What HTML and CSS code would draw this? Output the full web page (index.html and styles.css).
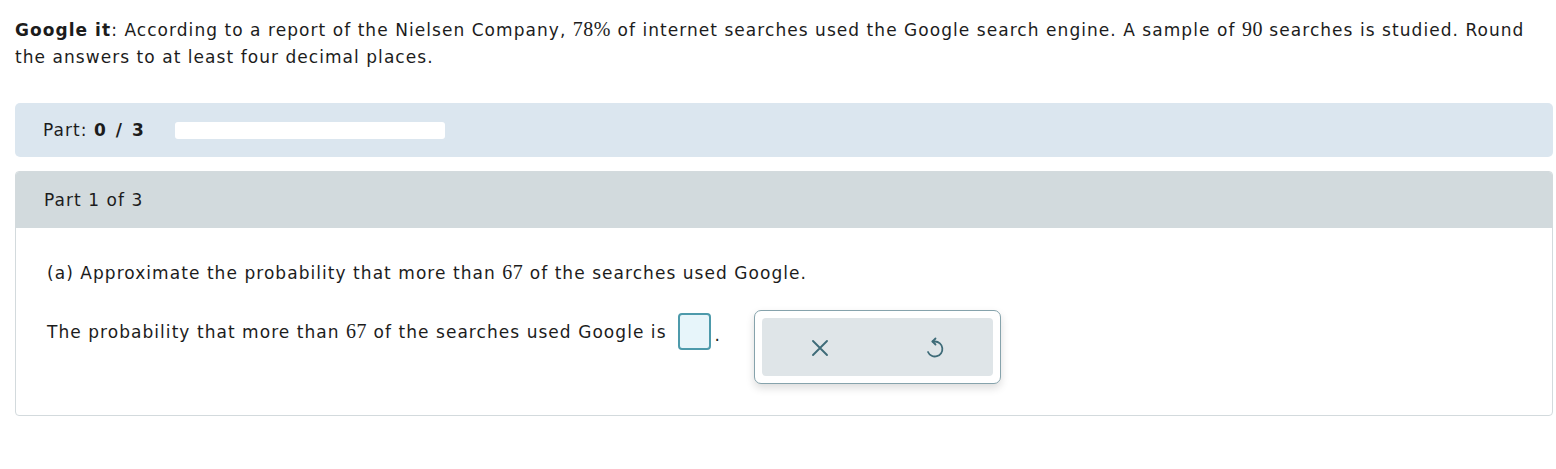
FILE: index.html
```html
<!DOCTYPE html>
<html>
<head>
<meta charset="utf-8">
<link rel="stylesheet" href="styles.css">
</head>
<body>
<div class="page">
  <p class="intro"><b>Google it</b>: According to a report of the Nielsen Company, <span class="m">78%</span> of internet searches used the Google search engine. A sample of <span class="m">90</span> searches is studied. Round the answers to at least four decimal places.</p>

  <div class="partbar">
    <span class="partlabel">Part: <b>0 / 3</b></span>
    <div class="progress"></div>
  </div>

  <div class="panel">
    <div class="panel-head">Part 1 of 3</div>
    <div class="panel-body">
      <p class="question">(a) Approximate the probability that more than <span class="m">67</span> of the searches used Google.</p>
      <div class="answer-row">
        <div class="answer">
          <span>The probability that more than <span class="m">67</span> of the searches used Google is</span>
          <span class="input"></span>
          <span class="dot">.</span>
        </div>
        <div class="toolbar">
          <div class="tools">
            <button class="tool" aria-label="clear">
              <svg width="18" height="18" viewBox="0 0 18 18"><path d="M2 2 L16 16 M16 2 L2 16" stroke="#3e6b78" stroke-width="1.9" fill="none" stroke-linecap="round"/></svg>
            </button>
            <button class="tool" aria-label="reset">
              <svg width="20" height="22" viewBox="0 0 20 22"><path d="M7.5 4.5 H10 A7.5 7.5 0 1 1 3 15" stroke="#3e6b78" stroke-width="1.8" fill="none" stroke-linecap="round"/><path d="M10.5 1.5 L7.5 4.5 L10.5 7.5" stroke="#3e6b78" stroke-width="1.8" fill="none" stroke-linecap="round" stroke-linejoin="round"/></svg>
            </button>
          </div>
        </div>
      </div>
    </div>
  </div>
</div>
</body>
</html>
```

FILE: styles.css
```css
html, body {
  margin: 0;
  padding: 0;
  background: #ffffff;
}
body {
  font-family: "DejaVu Sans", Verdana, sans-serif;
  font-size: 17px;
  letter-spacing: 1.05px;
  color: #1c1c1c;
}
.page {
  padding: 16px 3px 0 15px;
}
.intro {
  margin: 0;
  line-height: 27px;
}
.m {
  font-family: "Liberation Serif", "Times New Roman", serif;
  font-size: 20px;
  letter-spacing: 0.5px;
}
.partbar {
  margin-top: 32px;
  height: 54px;
  background: #dbe6ef;
  border-radius: 5px;
  display: flex;
  align-items: center;
  padding-left: 28px;
}
.partlabel {
  color: #1c1c1c;
}
.partlabel b {
  word-spacing: 2px;
}
.progress {
  margin-left: 30px;
  width: 270px;
  height: 17px;
  background: #ffffff;
  border-radius: 3px;
}
.panel {
  margin-top: 14px;
  border: 1px solid #d3dadd;
  border-radius: 4px;
  overflow: hidden;
}
.panel-head {
  height: 56px;
  background: #d2dadd;
  display: flex;
  align-items: center;
  padding-left: 28px;
}
.panel-body {
  padding: 31px 31px 31px 31px;
}
.question {
  margin: 0;
  line-height: 27px;
}
.answer-row {
  margin-top: 23px;
  display: flex;
  align-items: flex-start;
}
.answer {
  height: 43px;
  display: flex;
  align-items: center;
}
.input {
  display: inline-block;
  box-sizing: border-box;
  width: 33px;
  height: 37px;
  margin-left: 11px;
  border: 2px solid #4d9aab;
  border-radius: 4px;
  background: #e7f5fa;
}
.dot {
  margin-left: 4px;
  align-self: center;
  padding-top: 6px;
}
.toolbar {
  margin-left: 33px;
  box-sizing: border-box;
  width: 247px;
  height: 74px;
  border: 1px solid #86a3ac;
  border-radius: 7px;
  padding: 7px;
  background: #ffffff;
  box-shadow: 0 4px 9px rgba(0, 0, 0, 0.14);
}
.tools {
  display: flex;
  height: 100%;
  background: #dfe5e8;
  border-radius: 4px;
}
.tool {
  flex: 1;
  border: 0;
  background: transparent;
  display: flex;
  align-items: center;
  justify-content: center;
  padding: 0;
  padding-top: 2px;
}
```
